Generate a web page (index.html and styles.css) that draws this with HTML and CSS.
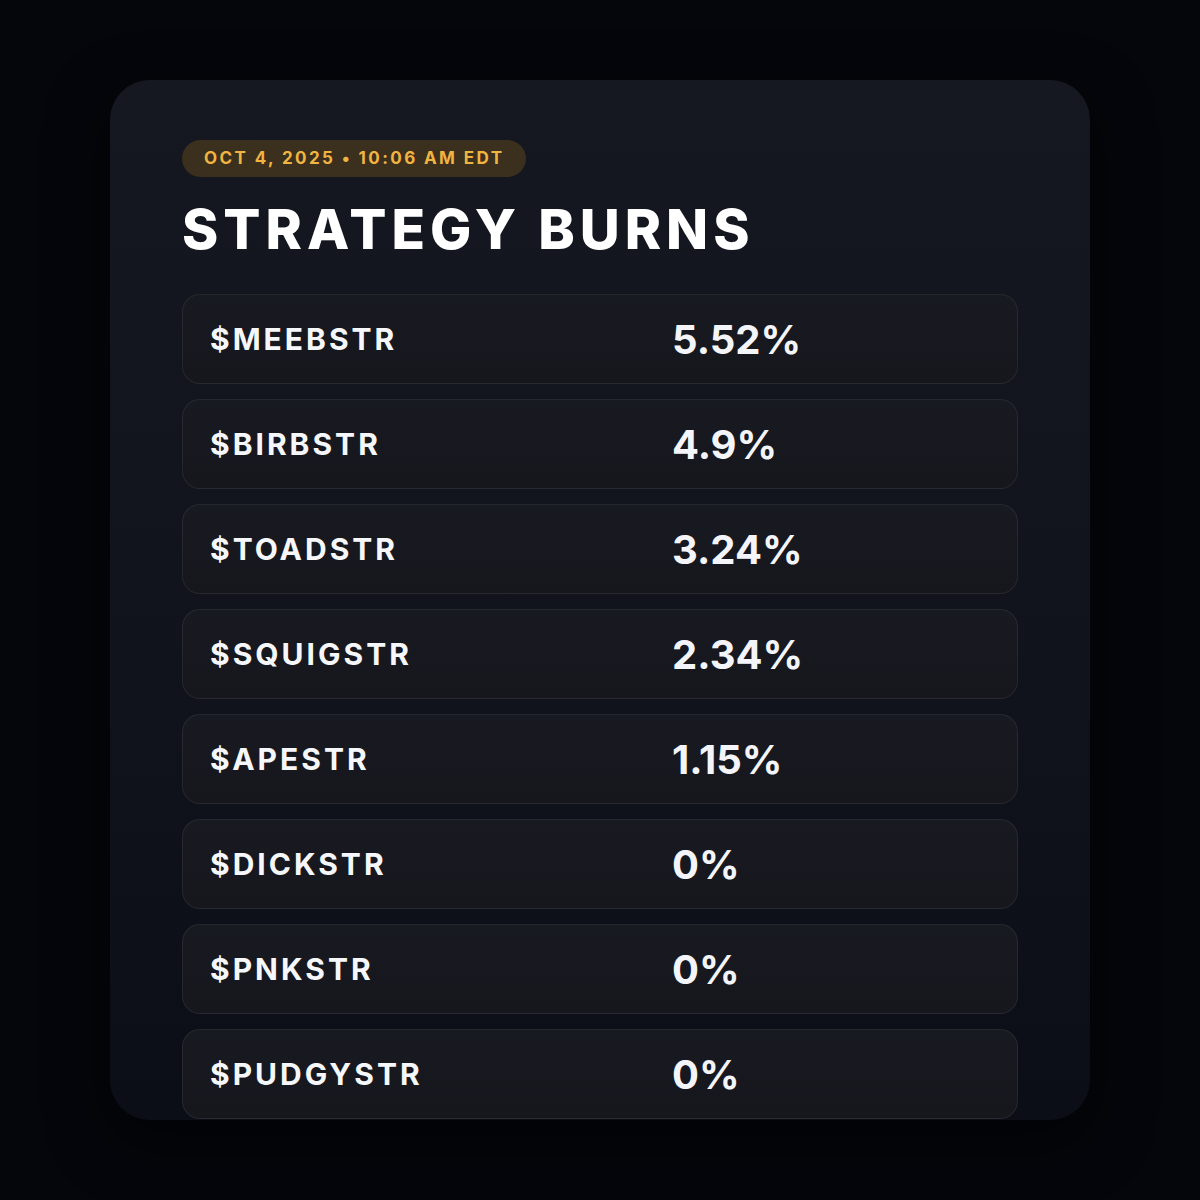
FILE: index.html
```html
<!DOCTYPE html>
<html>
<head>
<meta charset="utf-8">
<link rel="stylesheet" href="styles.css">
</head>
<body>
<div class="stage">
  <div class="card">
    <div class="badge">OCT 4, 2025 • 10:06 AM EDT</div>
    <h1 class="title">STRATEGY BURNS</h1>
    <div class="rows">
      <div class="row"><span class="name">$MEEBSTR</span><span class="val">5.52%</span></div>
      <div class="row"><span class="name">$BIRBSTR</span><span class="val">4.9%</span></div>
      <div class="row"><span class="name">$TOADSTR</span><span class="val">3.24%</span></div>
      <div class="row"><span class="name">$SQUIGSTR</span><span class="val">2.34%</span></div>
      <div class="row"><span class="name">$APESTR</span><span class="val">1.15%</span></div>
      <div class="row"><span class="name">$DICKSTR</span><span class="val">0%</span></div>
      <div class="row"><span class="name">$PNKSTR</span><span class="val">0%</span></div>
      <div class="row"><span class="name">$PUDGYSTR</span><span class="val">0%</span></div>
    </div>
  </div>
</div>
</body>
</html>
```

FILE: styles.css
```css
html, body {
  margin: 0;
  padding: 0;
  background: #04060b;
}
body {
  font-family: Inter, "Noto Sans", sans-serif;
  color: #f4f5f8;
}
.stage {
  width: 1200px;
  height: 1200px;
  padding: 80px 110px;
  box-sizing: border-box;
}
.card {
  height: 1040px;
  border-radius: 40px;
  background: linear-gradient(180deg, #151820 0%, #10131b 60%, #0b0e16 100%);
  box-shadow: 0 20px 60px rgba(0,0,0,0.6);
  padding: 60px 72px 0 72px;
  box-sizing: border-box;
}
.badge {
  display: inline-block;
  height: 37px;
  line-height: 37px;
  padding: 0 22px;
  border-radius: 19px;
  background: #3a301d;
  color: #f2b441;
  font-size: 17px;
  font-weight: 700;
  letter-spacing: 2.4px;
}
.title {
  margin: 17px 0 0 0;
  font-size: 55px;
  line-height: 70px;
  font-weight: 800;
  letter-spacing: 5px;
  color: #ffffff;
}
.rows {
  margin-top: 30px;
  display: flex;
  flex-direction: column;
  gap: 15px;
}
.row {
  height: 90px;
  box-sizing: border-box;
  border-radius: 18px;
  border: 1px solid rgba(255,255,255,0.07);
  background: linear-gradient(180deg, #181a21, #16171d);
  display: grid;
  grid-template-columns: 462px 1fr;
  align-items: center;
  padding: 0 27px;
}
.name {
  font-size: 30px;
  font-weight: 700;
  letter-spacing: 3px;
  color: #f6f7fa;
}
.val {
  font-size: 40px;
  font-weight: 700;
  color: #f4f5fa;
}
```
